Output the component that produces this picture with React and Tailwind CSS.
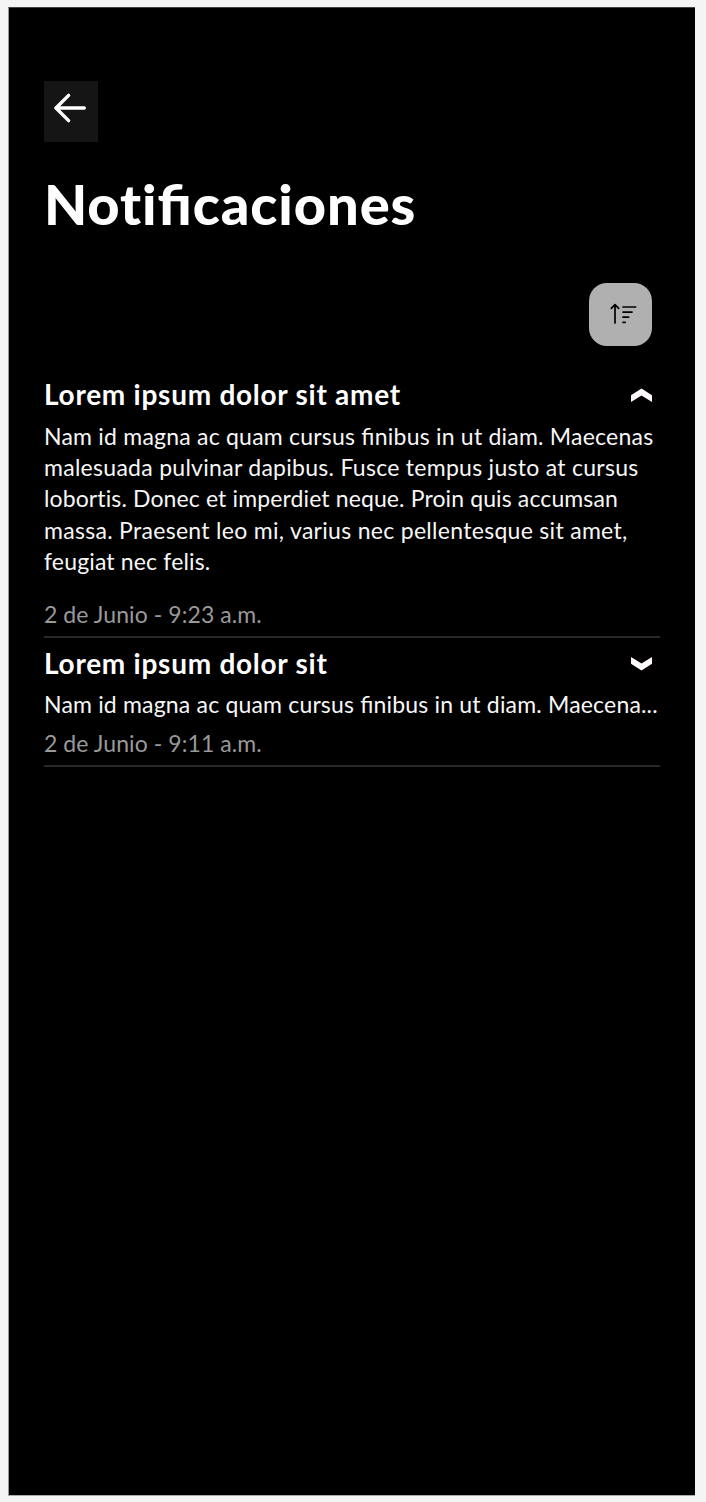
const Fi = () => <span className="[font-feature-settings:'liga'_1]">fi</span>;

function Chevron({ up }) {
  return (
    <svg className={up ? "mr-2 mt-[14px] h-[15px] w-[21px]" : "mr-2 mt-[13px] h-[15px] w-[21px] rotate-180"} viewBox="0 0 21 15" fill="#fffafa">
      <path d="M10.5 .5 21 7.2V14L10.5 7.6 0 14V7.2Z" />
    </svg>
  );
}

function Notification({ title, date, open, children }) {
  return (
    <article className={open ? "" : "pt-[4.7px]"}>
      <header className="flex h-[38px] items-start justify-between">
        <h2 className="text-[28px] leading-[40px] font-bold tracking-[0.74px] whitespace-nowrap">{title}</h2>
        <Chevron up={open} />
      </header>
      <div className="mt-[8.6px] text-[23px] leading-[31.4px] whitespace-nowrap text-[#f7f7f7]">{children}</div>
      <time className={`block text-[23px] leading-[31.4px] tracking-[0.07px] text-[#999] ${open ? "mt-[21px]" : "mt-[7.1px]"}`}>{date}</time>
      <div className="mt-[6px] h-[2px] bg-[#292929]" />
    </article>
  );
}

export default function App() {
  return (
    <div className="h-[1502px] w-[706px] bg-[#f4f4f4] pt-[7px] pl-[8px] font-['Lato',sans-serif]">
      <main className="flex h-[1489px] w-[687px] flex-col border-t border-b border-l border-t-[#444] border-b-[#aaa] border-l-[#999] bg-black pr-[35px] pl-[35px] text-white">
        <button aria-label="Volver" className="mt-[73px] h-[61px] w-[54px] shrink-0 bg-[#151515]">
          <svg className="block h-[61px] w-[54px]" viewBox="0 0 54 61" fill="none" stroke="#fff" strokeWidth="3.4" strokeLinecap="round" strokeLinejoin="round">
            <path d="M40.3 27H11.8M24.6 14.4 12 27l12.6 12.6" />
          </svg>
        </button>
        <h1 className="mt-[23.5px] text-[56px] leading-[76px] font-black tracking-[0.9px]">
          Noti<Fi />caciones
        </h1>
        <button aria-label="Ordenar" className="mt-[41.5px] mr-[8.5px] h-[63px] w-[63px] shrink-0 self-end rounded-[18px] bg-[#b0b0b0]">
          <svg className="block h-[63px] w-[63px]" viewBox="0 0 63 63" fill="none" stroke="#000" strokeWidth="1.7" strokeLinecap="round" strokeLinejoin="round">
            <path d="M26 40V21.8M22.3 25.4 26 21.7l3.7 3.7M34 24h12.6M34 29.1h9M34 34.2h5.6M34 39.3h2.2" />
          </svg>
        </button>
        <section className="mt-[28px] w-[616px]">
          <Notification open title="Lorem ipsum dolor sit amet" date="2 de Junio - 9:23 a.m.">
            <p className="tracking-[0.22px]">Nam id magna ac quam cursus <Fi />nibus in ut diam. Maecenas</p>
            <p className="tracking-[0.28px]">malesuada pulvinar dapibus. Fusce tempus justo at cursus</p>
            <p className="tracking-[0.12px]">lobortis. Donec et imperdiet neque. Proin quis accumsan</p>
            <p className="tracking-[0.3px]">massa. Praesent leo mi, varius nec pellentesque sit amet,</p>
            <p className="tracking-[0.16px]">feugiat nec felis.</p>
          </Notification>
          <Notification title="Lorem ipsum dolor sit" date="2 de Junio - 9:11 a.m.">
            <p className="tracking-[0.18px]">Nam id magna ac quam cursus <Fi />nibus in ut diam. Maecena...</p>
          </Notification>
        </section>
      </main>
    </div>
  );
}
